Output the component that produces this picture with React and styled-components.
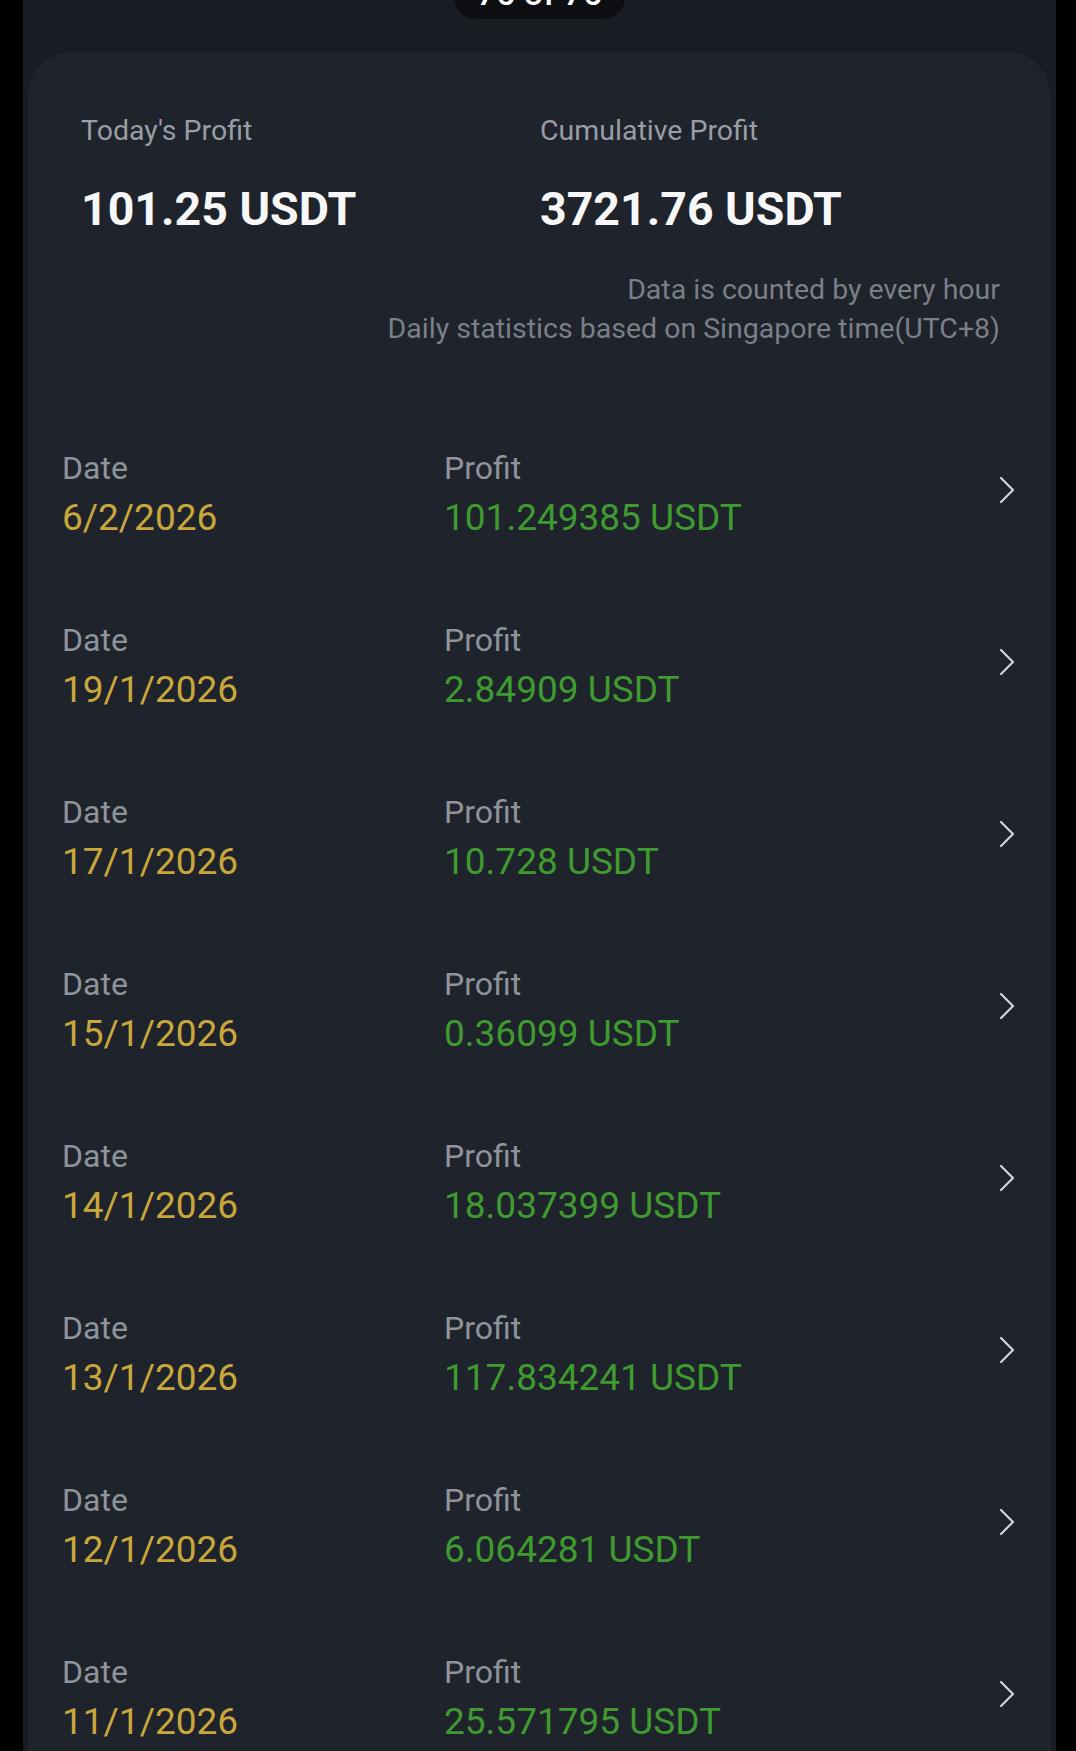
import React from 'react';
import styled, { createGlobalStyle } from 'styled-components';

const GlobalStyle = createGlobalStyle`
  html, body {
    margin: 0;
    padding: 0;
    background: #000;
  }
  body {
    font-family: Roboto, "Noto Sans", Arial, sans-serif;
    overflow: hidden;
  }
`;

const Screen = styled.div`
  margin: 0 20px 0 23px;
  min-height: 1751px;
  background: #181c23;
  overflow: hidden;
  display: flex;
  flex-direction: column;
`;

const CounterPill = styled.div`
  align-self: center;
  margin-top: -41px;
  width: 171px;
  height: 60px;
  border-radius: 22px;
  background: #0c0e11;
  color: #fff;
  font-size: 34px;
  font-weight: 500;
  line-height: 1;
  display: flex;
  align-items: flex-end;
  justify-content: center;
  padding-bottom: 9px;
  box-sizing: border-box;
`;

const Card = styled.div`
  margin: 33px 5px 0;
  background: #1f232c;
  border-radius: 44px 44px 0 0;
  flex: 1;
`;

const Summary = styled.div`
  display: grid;
  grid-template-columns: 459px 1fr;
  padding: 62px 51px 0 53px;
`;

const SummaryCol = styled.div`
  display: flex;
  flex-direction: column;
  gap: 36px;
`;

const SummaryLabel = styled.div`
  font-size: 28.5px;
  line-height: 33px;
  color: #999da5;
`;

const SummaryValue = styled.div`
  font-size: 46.5px;
  line-height: 52px;
  font-weight: 700;
  color: #f7f7f7;
`;

const Notes = styled.div`
  grid-column: 1 / -1;
  margin-top: 35px;
  text-align: right;
  font-size: 28.5px;
  line-height: 39px;
  color: #7b7f87;
`;

const List = styled.div`
  margin-top: 60px;
`;

const Row = styled.div`
  display: flex;
  align-items: center;
  padding: 38px 36px 38px 34px;
`;

const Field = styled.div`
  display: flex;
  flex-direction: column;
  gap: 4px;
  width: ${p => p.$width || 'auto'};
  flex: ${p => (p.$grow ? 1 : 'none')};
`;

const FieldLabel = styled.div`
  font-size: 32px;
  line-height: 44px;
  color: #8f939b;
`;

const FieldValue = styled.div`
  font-size: 37px;
  line-height: 48px;
  color: ${p => p.$color};
`;

const Chevron = styled.svg`
  width: 16px;
  height: 28px;
  margin-top: -8px;
  flex: none;
`;

const rows = [
  ['6/2/2026', '101.249385 USDT'],
  ['19/1/2026', '2.84909 USDT'],
  ['17/1/2026', '10.728 USDT'],
  ['15/1/2026', '0.36099 USDT'],
  ['14/1/2026', '18.037399 USDT'],
  ['13/1/2026', '117.834241 USDT'],
  ['12/1/2026', '6.064281 USDT'],
  ['11/1/2026', '25.571795 USDT'],
];

export default function App() {
  return (
    <>
      <GlobalStyle />
      <Screen>
        <CounterPill>76 of 76</CounterPill>
        <Card>
          <Summary>
            <SummaryCol>
              <SummaryLabel>Today's Profit</SummaryLabel>
              <SummaryValue>101.25 USDT</SummaryValue>
            </SummaryCol>
            <SummaryCol>
              <SummaryLabel>Cumulative Profit</SummaryLabel>
              <SummaryValue>3721.76 USDT</SummaryValue>
            </SummaryCol>
            <Notes>
              <div>Data is counted by every hour</div>
              <div>Daily statistics based on Singapore time(UTC+8)</div>
            </Notes>
          </Summary>
          <List>
            {rows.map(([date, profit]) => (
              <Row key={date}>
                <Field $width="382px">
                  <FieldLabel>Date</FieldLabel>
                  <FieldValue $color="#c9a73b">{date}</FieldValue>
                </Field>
                <Field $grow>
                  <FieldLabel>Profit</FieldLabel>
                  <FieldValue $color="#3f9a2f">{profit}</FieldValue>
                </Field>
                <Chevron viewBox="0 0 16 28" fill="none">
                  <polyline points="2,2 14,14 2,26" stroke="#d0d3d8" strokeWidth="2.2" strokeLinecap="round" strokeLinejoin="round" />
                </Chevron>
              </Row>
            ))}
          </List>
        </Card>
      </Screen>
    </>
  );
}
